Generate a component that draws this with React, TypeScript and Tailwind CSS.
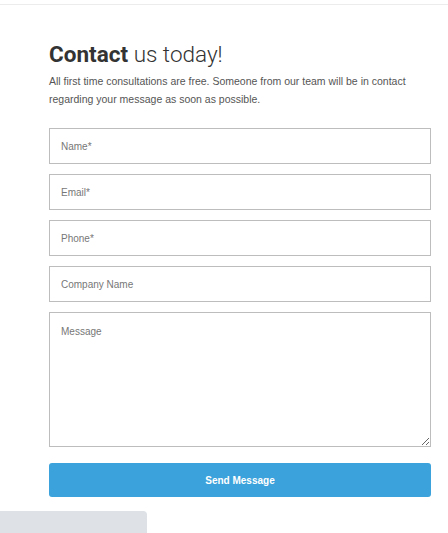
import React from "react";

export default function App() {
  const inputCls =
    "block w-full h-[36px] border border-[#bdbdbd] bg-white px-[11px] text-[10px] text-[#555] placeholder:text-[#777] outline-none";
  return (
    <div className="w-[448px] h-[533px] bg-white relative overflow-hidden" style={{ fontFamily: "'Liberation Sans', Arial, sans-serif" }}>
      <div className="h-[4px]" />
      <div className="h-px bg-[#ececec]" />
      <div className="ml-[49px] w-[382px] pt-[35px]">
        <h1 className="text-[22.5px] leading-[28px] text-[#333]" style={{ fontFamily: "Roboto, sans-serif" }}>
          <span className="font-bold">Contact</span> <span className="font-light">us today!</span>
        </h1>
        <p className="mt-[4px] w-[400px] text-[10.5px] leading-[18px] text-[#555]">
          All first time consultations are free. Someone from our team will be in contact
          <br />
          regarding your message as soon as possible.
        </p>
        <form className="mt-[20px] flex flex-col gap-[10px]" onSubmit={(e) => e.preventDefault()}>
          <input className={inputCls} placeholder="Name*" />
          <input className={inputCls} placeholder="Email*" />
          <input className={inputCls} placeholder="Phone*" />
          <input className={inputCls} placeholder="Company Name" />
          <textarea
            className="block w-full h-[135px] border border-[#bdbdbd] bg-white px-[11px] pt-[11px] text-[10px] text-[#555] placeholder:text-[#777] outline-none"
            placeholder="Message"
          />
          <button
            type="submit"
            className="mt-[6px] h-[34px] w-full rounded-[3px] bg-[#3ba2db] text-white text-[10px] font-bold"
          >
            Send Message
          </button>
        </form>
      </div>
      <div className="absolute left-0 top-[511px] w-[147px] h-[30px] bg-[#dee1e5] rounded-tr-[4px]" />
    </div>
  );
}
